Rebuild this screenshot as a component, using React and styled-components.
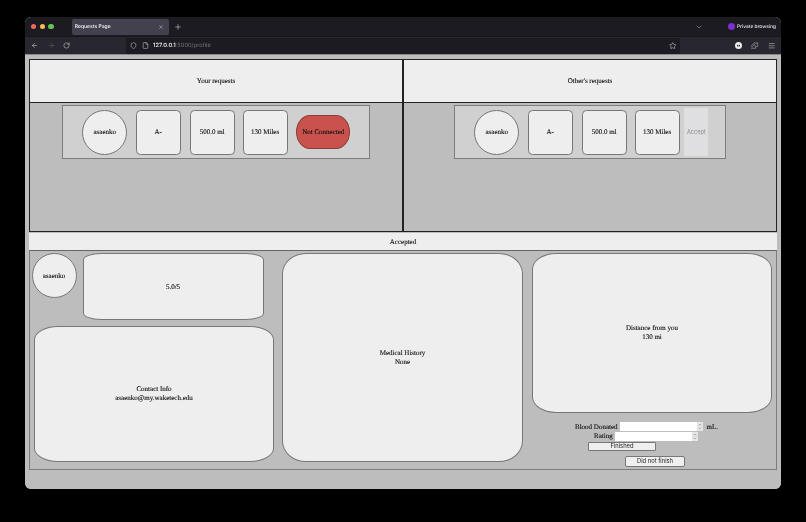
import React from "react";
import styled, { createGlobalStyle } from "styled-components";
import { ArrowLeft, ArrowRight, RotateCw, Shield, File, Star, Puzzle, Menu, ChevronDown, X, Plus } from "lucide-react";

const Global = createGlobalStyle`
  html, body { margin: 0; padding: 0; background: #000; }
  body {
    width: 806px; height: 522px; overflow: hidden;
    font-family: "Liberation Serif", "Times New Roman", serif;
    text-rendering: geometricPrecision;
  }
  * { box-sizing: border-box; }
`;

const Win = styled.div`
  position: relative; top: 17px; left: 25px;
  width: 756px; height: 472px; border-radius: 6px; overflow: hidden;
  display: flex; flex-direction: column; background: #bdbdbd;
  filter: blur(0.3px); will-change: transform;
`;
const TabBar = styled.div`
  height: 19px; background: #1c1b22; display: flex; align-items: center; flex: none;
  padding-left: 6px; color: #e6e6ea; font-family: "Inter", "Liberation Sans", sans-serif;
`;
const Dot = styled.span`
  width: 5.4px; height: 5.4px; border-radius: 50%; background: ${p => p.$c}; margin-right: 3.2px; flex: none;
`;
const Tab = styled.div`
  margin-left: 15px; width: 97px; height: 16px; border-radius: 2px; background: #42414d;
  display: flex; align-items: center; justify-content: space-between; padding: 0 5px 0 3px;
  font-size: 5px; font-weight: 600; color: #e8e8ec;
`;
const PlusBtn = styled.span` margin-left: 5px; display: flex; `;
const Spacer = styled.div` flex: 1; `;
const Chevron = styled.span` display: flex; margin-right: 25px; color: #b8b8c0; `;
const Private = styled.div`
  display: flex; align-items: center; gap: 2px; font-size: 4.8px; margin-right: 5px; color: #d8d8de; font-weight: 600;
`;
const Mask = styled.span`
  width: 7px; height: 7px; border-radius: 50%; background: #7d2fd0; display: block;
`;
const ToolBar = styled.div`
  height: 18px; background: #28272f; display: flex; align-items: center; flex: none; color: #d5d5da;
  border-top: 1px solid #17161c; padding-left: 6px;
`;
const NavBtn = styled.span`
  display: flex; width: 7px; margin-right: ${p => p.$mr}px; opacity: ${p => p.$dim ? 0.35 : 1};
`;
const UrlBar = styled.div`
  margin-left: 56px; width: 554px; height: 16px; background: #1c1b22;
  display: flex; align-items: center; padding: 0 4px; gap: 5px;
  font-family: "Inter", "Liberation Sans", sans-serif; font-size: 5.7px; color: #e8e8ec; font-weight: 600;
`;
const UrlText = styled.span` margin-left: -1px; `;
const UrlDim = styled.span` color: #75757c; font-weight: 400; margin-left: -5px; `;
const Tools = styled.div`
  display: flex; align-items: center; margin-left: 55px; gap: 9px;
`;
const Account = styled.span`
  width: 7px; height: 7px; border-radius: 50%; background: #ececec; display: flex; align-items: center; justify-content: center;
`;

const Page = styled.div`
  flex: 1; background: #bdbdbd; padding: 4px 4px 0; border-top: 1px solid #8a8a8a; color: #111;
  font-size: 7px; -webkit-text-stroke: 0.12px #111;
`;
const Frame = styled.div`
  width: 748px; height: 173px; display: flex; border: 1px solid #222; border-width: 1px 0 1px 1px;
`;
const RequestCol = styled.section`
  flex: 1; display: flex; flex-direction: column; align-items: center;
  border-right: ${p => p.$thick ? 2 : 1}px solid #222;
`;
const ColTitle = styled.div`
  align-self: stretch; height: 43px; background: #eee; display: flex; align-items: center; justify-content: center;
  border-bottom: 1px solid #222; flex: none;
`;
const RequestRow = styled.div`
  margin-top: 2px; height: 54px; border: 1px solid #7d7d7d; background: #d0d0d0;
  display: flex; align-items: center; padding-left: 19.3px; width: ${p => p.$w}px;
`;
const Circle = styled.div`
  width: 45px; height: 45px; border-radius: 50%; border: 1px solid #777; background: #eee;
  display: flex; align-items: center; justify-content: center; flex: none;
`;
const InfoCard = styled.div`
  width: 45px; height: 45px; border-radius: 10%; border: 1px solid #777; background: #eee; flex: none;
  margin-left: ${p => p.$ml}px;
  display: flex; align-items: center; justify-content: center;
`;
const Status = styled.div`
  width: 54px; height: 34px; margin-left: 8.7px; border-radius: 14px / 17px; background: #c9524c; border: 1px solid #8d3f3b;
  display: flex; align-items: center; justify-content: center; white-space: nowrap; flex: none;
`;
const AcceptBtn = styled.button`
  width: 24px; height: 48px; margin-left: 4.7px; background: #dfdfe2; border: 0; padding: 0; color: #8a8a8e;
  font-family: "Inter", "Liberation Sans", sans-serif; font-size: 5.6px; flex: none; -webkit-text-stroke: 0;
`;
const AcceptedBar = styled.div`
  width: 748px; height: 18px; margin-top: 1px; background: #eee; border-bottom: 1px solid #666;
  display: flex; align-items: center; justify-content: center;
`;
const Lower = styled.div`
  width: 748px; height: 219px; border: 1px solid #7d7d7d; border-top: 0;
  display: flex; padding: 2px 4px 0 1.5px;
`;
const LeftCol = styled.div` width: 242.5px; display: flex; flex-direction: column; flex: none; `;
const TopRow = styled.div` display: flex; gap: 6px; align-items: flex-start; `;
const RatingBox = styled.div`
  width: 181px; height: 67px; border: 1px solid #777; border-radius: 10%; background: #eee;
  display: flex; align-items: center; justify-content: center;
`;
const Big = styled.div`
  width: ${p => p.$w}px; height: ${p => p.$h}px; flex: none; margin: ${p => p.$m || 0};
  border: 1px solid #777; border-radius: 10%; background: #eee;
  display: flex; align-items: center; justify-content: center; text-align: center; line-height: 8.6px;
`;
const RightCol = styled.div` width: 240px; margin-left: 9px; display: flex; flex-direction: column; `;
const FormArea = styled.div`
  flex: 1; display: flex; flex-direction: column; align-items: flex-start; padding-top: 9px;
`;
const FieldRow = styled.label`
  display: flex; align-items: center; height: 9.5px; margin-left: ${p => p.$ml}px; gap: 2px;
`;
const NumberField = styled.span`
  width: 83px; height: 9px; display: flex; background: #fff;
`;
const NumberInput = styled.input`
  flex: 1; min-width: 0; border: 0; padding: 0; height: 100%; background: #fff; outline: none;
`;
const Spin = styled.span`
  width: 6px; height: 100%; background: #e6e6e6; display: flex; align-items: center; justify-content: center; color: #888;
`;
const Unit = styled.span` margin-left: 2px; `;
const FinishBtn = styled.button`
  width: 68px; height: 9px; margin: 0.5px 0 0 56px; padding: 0; background: #efefef; border: 1px solid #777; border-radius: 1px;
  font-family: "Inter", "Liberation Sans", sans-serif; font-size: 5.8px; color: #222; line-height: 1; -webkit-text-stroke: 0;
`;
const NotFinishBtn = styled.button`
  width: 60px; height: 11px; margin: 5px 0 0 93px; padding: 0; background: #efefef; border: 1px solid #777; border-radius: 2px;
  font-family: "Inter", "Liberation Sans", sans-serif; font-size: 5.8px; color: #222; line-height: 1; -webkit-text-stroke: 0;
`;

const SpinIcon = () => (
  <svg width="4" height="7" viewBox="0 0 4 7" fill="none" stroke="currentColor" strokeWidth="0.6">
    <path d="M.7 2.4 2 1l1.3 1.4M.7 4.6 2 6l1.3-1.4" />
  </svg>
);

const Request = ({ w, children }) => (
  <RequestRow $w={w}>
    <Circle>asaenko</Circle>
    <InfoCard $ml={8.3}>A-</InfoCard>
    <InfoCard $ml={9}>500.0 ml</InfoCard>
    <InfoCard $ml={8}>130 Miles</InfoCard>
    {children}
  </RequestRow>
);

export default function App() {
  return (
    <>
      <Global />
      <Win>
        <TabBar>
          <Dot $c="#ed6a5e" /><Dot $c="#f4bf4f" /><Dot $c="#61c554" />
          <Tab>Requests Page<X size={6} strokeWidth={1.5} /></Tab>
          <PlusBtn><Plus size={8} strokeWidth={1.5} /></PlusBtn>
          <Spacer />
          <Chevron><ChevronDown size={8} strokeWidth={1.5} /></Chevron>
          <Private><Mask />Private browsing</Private>
        </TabBar>
        <ToolBar>
          <NavBtn $mr={10}><ArrowLeft size={7} strokeWidth={1.8} /></NavBtn>
          <NavBtn $mr={8} $dim><ArrowRight size={7} strokeWidth={1.8} /></NavBtn>
          <NavBtn $mr={0}><RotateCw size={7} strokeWidth={1.8} /></NavBtn>
          <UrlBar>
            <Shield size={7} strokeWidth={1.6} />
            <File size={7} strokeWidth={1.6} />
            <UrlText>127.0.0.1</UrlText><UrlDim>:5000/profile</UrlDim>
            <Spacer />
            <Star size={7.5} strokeWidth={1.6} />
          </UrlBar>
          <Tools>
            <Account>
              <svg width="5" height="5" viewBox="0 0 10 10" fill="#222"><path d="M2 7V3l3 2.5L8 3v4H6.6V5.6L5 7 3.4 5.6V7z" /></svg>
            </Account>
            <Puzzle size={7.5} strokeWidth={1.6} />
            <Menu size={7.5} strokeWidth={1.6} />
          </Tools>
        </ToolBar>
        <Page>
          <Frame>
            <RequestCol $thick>
              <ColTitle>Your requests</ColTitle>
              <Request w={308}>
                <Status>Not Connected</Status>
              </Request>
            </RequestCol>
            <RequestCol>
              <ColTitle>Other's requests</ColTitle>
              <Request w={272}>
                <AcceptBtn>Accept</AcceptBtn>
              </Request>
            </RequestCol>
          </Frame>
          <AcceptedBar>Accepted</AcceptedBar>
          <Lower>
            <LeftCol>
              <TopRow>
                <Circle>asaenko</Circle>
                <RatingBox>5.0/5</RatingBox>
              </TopRow>
              <Big $w={240} $h={136} $m="6px 0 0 2.5px">Contact Info<br />asaenko@my.waketech.edu</Big>
            </LeftCol>
            <Big $w={241} $h={209} $m="0 0 0 8px">Medical History<br />None</Big>
            <RightCol>
              <Big $w={240} $h={160}>Distance from you<br />130 mi</Big>
              <FormArea>
                <FieldRow $ml={43}>
                  Blood Donated
                  <NumberField>
                    <NumberInput type="text" aria-label="Blood Donated" />
                    <Spin><SpinIcon /></Spin>
                  </NumberField>
                  <Unit>mL.</Unit>
                </FieldRow>
                <FieldRow $ml={62}>
                  Rating
                  <NumberField>
                    <NumberInput type="text" aria-label="Rating" />
                    <Spin><SpinIcon /></Spin>
                  </NumberField>
                </FieldRow>
                <FinishBtn>Finished</FinishBtn>
                <NotFinishBtn>Did not finish</NotFinishBtn>
              </FormArea>
            </RightCol>
          </Lower>
        </Page>
      </Win>
    </>
  );
}
